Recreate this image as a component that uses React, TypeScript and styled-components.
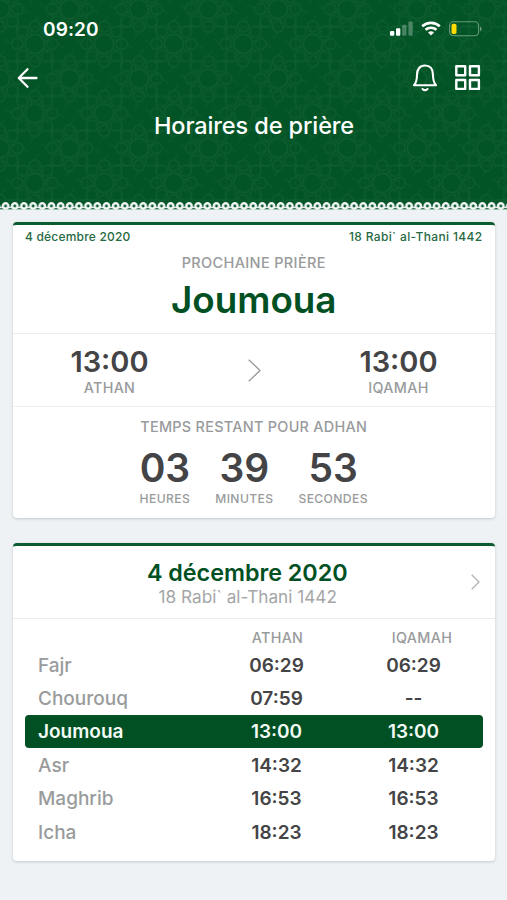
import React from "react";
import styled, { createGlobalStyle } from "styled-components";

const GREEN = "#005023";
const GREY = "#999b9c";
const DARK = "#444446";

const GlobalStyle = createGlobalStyle`
  * { box-sizing: border-box; }
  body { margin: 0; background: #eef2f5; font-family: Inter, "Liberation Sans", sans-serif; }
`;

const Screen = styled.div`
  width: 507px;
  height: 900px;
  overflow: hidden;
  background: #eef2f5;
`;

const Header = styled.header`
  position: relative;
  height: 210px;
  color: #fff;
`;

const HeaderArt = styled.svg`
  position: absolute;
  inset: 0;
  display: block;
`;

const HeaderContent = styled.div`
  position: relative;
`;

const StatusBar = styled.div`
  display: flex;
  align-items: center;
  justify-content: space-between;
  height: 57px;
  padding: 0 25px 0 43px;
`;

const Clock = styled.span`
  padding-top: 1px;
  font-size: 19px;
  font-weight: 600;
  letter-spacing: 0.1px;
`;

const StatusIcons = styled.div`
  display: flex;
  align-items: center;
  gap: 8px;
`;

const NavBar = styled.nav`
  display: flex;
  align-items: center;
  justify-content: space-between;
  height: 40px;
  padding: 1px 26px 0 17px;
`;

const NavActions = styled.div`
  display: flex;
  align-items: center;
  gap: 17px;
`;

const IconButton = styled.button`
  display: block;
  padding: 0;
  border: 0;
  background: none;
  color: inherit;
  svg { display: block; }
`;

const PageTitle = styled.h1`
  margin: 13px 0 0;
  padding-left: 1px;
  font-size: 23.5px;
  font-weight: 500;
  line-height: 32px;
  letter-spacing: -0.1px;
  text-align: center;
`;

const Cards = styled.main`
  display: flex;
  flex-direction: column;
  gap: 25px;
  padding: 12px 12.5px 0 13px;
`;

const Card = styled.section<{ $height: number }>`
  height: ${(p) => p.$height}px;
  border-top: 3px solid #0b5c30;
  border-radius: 4px;
  background: #fff;
  box-shadow: 0 1px 3px rgba(40, 55, 65, 0.22);
`;

const NextPrayer = styled.div`
  height: 109px;
  text-align: center;
  border-bottom: 1px solid #e9ebed;
`;

const DateRow = styled.div`
  display: flex;
  justify-content: space-between;
  padding: 3px 12px 0;
  color: #256a43;
  font-size: 12px;
  font-weight: 500;
  line-height: 18px;
  letter-spacing: 0.2px;
  > :last-child { letter-spacing: 0.35px; }
`;

const Caption = styled.div<{ $size?: number; $line?: number; $spacing?: number }>`
  color: ${GREY};
  font-size: ${(p) => p.$size ?? 14.3}px;
  font-weight: 500;
  line-height: ${(p) => p.$line ?? 20}px;
  letter-spacing: ${(p) => p.$spacing ?? 0.35}px;
`;

const PrayerName = styled.h2`
  margin: 1px 0 0;
  color: ${GREEN};
  font-size: 36.8px;
  font-weight: 600;
  line-height: 38px;
`;

const Times = styled.div`
  display: grid;
  grid-template-columns: 193px 1fr 192px;
  align-items: center;
  height: 73px;
  text-align: center;
  border-bottom: 1px solid #eff0f1;
  svg { display: block; margin: auto; }
`;

const BigTime = styled.div`
  padding-top: 3px;
  color: ${DARK};
  font-size: 29px;
  font-weight: 600;
  line-height: 31px;
`;

const Countdown = styled.div`
  padding-top: 10px;
  text-align: center;
`;

const Units = styled.div`
  display: flex;
  justify-content: center;
  gap: 25px;
  margin-top: 9px;
`;

const UnitValue = styled.div`
  color: ${DARK};
  font-size: 39px;
  font-weight: 600;
  line-height: 44px;
`;

const DayHeader = styled.div`
  display: grid;
  grid-template-columns: 27px 1fr 40px;
  align-items: center;
  height: 72.5px;
  border-bottom: 1px solid #e9ebed;
  text-align: center;
  svg { display: block; margin-left: 16px; margin-top: 1px; }
`;

const DayTitle = styled.h3`
  margin: 6px 0 0;
  color: ${GREEN};
  font-size: 23.3px;
  font-weight: 600;
  line-height: 25px;
`;

const HijriDate = styled.div`
  padding-left: 1px;
  color: #a4a6a7;
  font-size: 17.2px;
  font-weight: 400;
  line-height: 24px;
`;

const Table = styled.div`
  padding: 8.5px 12px 0;
`;

const Row = styled.div<{ $active?: boolean }>`
  display: grid;
  grid-template-columns: 183px 137px 137px;
  align-items: center;
  height: 33.4px;
  padding-top: 1px;
  border-radius: 4px;
  background: ${(p) => (p.$active ? GREEN : "transparent")};
  color: ${(p) => (p.$active ? "#f4faf6" : DARK)};
  font-size: 19px;
  font-weight: 600;
  text-align: center;
`;

const HeadRow = styled(Row)`
  height: 21px;
  padding: 0 0 0 1px;
  > :last-child { padding-left: 15px; }
`;

const RowName = styled.span<{ $active?: boolean }>`
  padding-left: 13px;
  color: ${(p) => (p.$active ? "#f4faf6" : GREY)};
  font-weight: ${(p) => (p.$active ? 600 : 500)};
  text-align: left;
`;

const P = 69.5;
const RING = [0, 45, 90, 135, 180, 225, 270, 315];

function Rosette({ x, y }: { x: number; y: number }) {
  return (
    <g transform={`translate(${x} ${y})`}>
      <circle r="9.6" strokeWidth="1.4" />
      {RING.map((a) => (
        <g key={a} transform={`rotate(${a})`}>
          <circle cx="17.4" r="5.6" />
          <path d="M9.2 3.8 L13 9.4 M23 0 L29 4.5" opacity="0.7" />
        </g>
      ))}
    </g>
  );
}

function HeaderBackground() {
  const spots = [[0, 0], [P, 0], [0, P], [P, P], [P / 2, P / 2]];
  return (
    <HeaderArt width="507" height="210" viewBox="0 0 507 210">
      <defs>
        <pattern id="rosettes" x="0" y="9.2" width={P} height={P} patternUnits="userSpaceOnUse">
          <g fill="none" stroke="#1f6c3d" strokeWidth="1.1" opacity="0.42">
            {spots.map(([x, y]) => <Rosette key={`${x}-${y}`} x={x} y={y} />)}
            <path d={`M0 ${P / 2 - 17} H${P} M0 ${P / 2 + 17} H${P} M${P / 2 + 17} 0 V${P} M${P / 2 - 17} 0 V${P}`} opacity="0.5" />
          </g>
        </pattern>
        <pattern id="lace" x="1" y="201" width="9.17" height="9" patternUnits="userSpaceOnUse">
          <rect y="5.6" width="9.17" height="1.6" fill="#dfeae5" />
          <rect y="8.6" width="9.17" height="0.4" fill="#eef2f5" />
          <circle cx="4.6" cy="5" r="2.7" fill="#0b5a2e" stroke="#f1f6f4" strokeWidth="2.5" />
        </pattern>
      </defs>
      <rect width="507" height="209.5" fill="#025326" />
      <rect width="507" height="209.5" fill="url(#rosettes)" />
      <rect y="201" width="507" height="9" fill="url(#lace)" />
    </HeaderArt>
  );
}

const Signal = () => (
  <svg width="23" height="15" viewBox="0 0 23 15" fill="#fff">
    <rect x="0" y="10" width="4.3" height="4.7" rx="1" />
    <rect x="6" y="7.3" width="4.3" height="7.4" rx="1" />
    <rect x="12.2" y="3.8" width="4.3" height="10.9" rx="1" opacity=".28" />
    <rect x="18.4" y="0.5" width="4.3" height="14.2" rx="1" opacity=".28" />
  </svg>
);

const Wifi = () => (
  <svg width="20" height="15" viewBox="0 0 20 15" fill="none" stroke="#fff" strokeWidth="2.6">
    <path d="M1.2 5.3 C6.2 .7 13.8 .7 18.8 5.3" />
    <path d="M4.5 8.8 C7.7 6 12.3 6 15.5 8.8" />
    <path d="M7 11.5 Q10 9.2 13 11.5 L10 14.5 Z" fill="#fff" stroke="none" />
  </svg>
);

const Battery = () => (
  <svg width="33" height="16" viewBox="0 0 33 16">
    <rect x=".6" y=".8" width="29" height="14" rx="4" fill="none" stroke="#fff" strokeOpacity=".4" strokeWidth="1.1" />
    <path d="M31 5.5 Q34 8 31 10.5Z" fill="#fff" opacity=".45" />
    <rect x="2.5" y="2.7" width="5" height="10.3" rx="1.8" fill="#ffdc00" />
  </svg>
);

const BackArrow = () => (
  <svg width="22" height="22" viewBox="0 0 22 22" fill="none" stroke="currentColor" strokeWidth="2.3" strokeLinecap="round" strokeLinejoin="round">
    <path d="M19.5 11 H2 M10.5 2.2 L1.8 11 L10.5 19.8" />
  </svg>
);

const Bell = () => (
  <svg width="26" height="28" viewBox="0 0 26 28" fill="none" stroke="currentColor" strokeWidth="2.1" strokeLinejoin="round" strokeLinecap="round">
    <path d="M2 21.2 C4.5 18.5 5 16.5 5 11 C5 5 8 1.5 13 1.5 C18 1.5 21 5 21 11 C21 16.5 21.5 18.5 24 21.2 Z" />
    <path d="M10.5 25 Q13 27.6 15.5 25" fill="currentColor" />
  </svg>
);

const GridIcon = () => (
  <svg width="26" height="26" viewBox="0 0 26 26" fill="none" stroke="currentColor" strokeWidth="2.4" strokeLinejoin="round">
    <rect x="1.3" y="1.3" width="8.9" height="8.9" />
    <rect x="15" y="1.3" width="8.9" height="8.9" />
    <rect x="1.3" y="15" width="8.9" height="8.9" />
    <rect x="15" y="15" width="8.9" height="8.9" />
  </svg>
);

const Chevron = ({ w, h, color }: { w: number; h: number; color: string }) => (
  <svg width={w} height={h} viewBox={`0 0 ${w} ${h}`} fill="none" stroke={color} strokeWidth="1.3" strokeLinejoin="round">
    <path d={`M.7 .7 L${w - 1} ${h / 2} L.7 ${h - 0.7}`} />
  </svg>
);

const units = [
  ["03", "HEURES"],
  ["39", "MINUTES"],
  ["53", "SECONDES"],
];

const prayers = [
  { name: "Fajr", athan: "06:29", iqamah: "06:29" },
  { name: "Chourouq", athan: "07:59", iqamah: "--" },
  { name: "Joumoua", athan: "13:00", iqamah: "13:00", active: true },
  { name: "Asr", athan: "14:32", iqamah: "14:32" },
  { name: "Maghrib", athan: "16:53", iqamah: "16:53" },
  { name: "Icha", athan: "18:23", iqamah: "18:23" },
];

export default function App() {
  return (
    <Screen>
      <GlobalStyle />
      <Header>
        <HeaderBackground />
        <HeaderContent>
          <StatusBar>
            <Clock>09:20</Clock>
            <StatusIcons><Signal /><Wifi /><Battery /></StatusIcons>
          </StatusBar>
          <NavBar>
            <IconButton aria-label="Retour"><BackArrow /></IconButton>
            <NavActions>
              <IconButton aria-label="Notifications"><Bell /></IconButton>
              <IconButton aria-label="Menu"><GridIcon /></IconButton>
            </NavActions>
          </NavBar>
          <PageTitle>Horaires de prière</PageTitle>
        </HeaderContent>
      </Header>
      <Cards>
        <Card $height={296}>
          <NextPrayer>
            <DateRow><span>4 décembre 2020</span><span>18 Rabi` al-Thani 1442</span></DateRow>
            <Caption $line={34} $size={14.5}>PROCHAINE PRIÈRE</Caption>
            <PrayerName>Joumoua</PrayerName>
          </NextPrayer>
          <Times>
            <div><BigTime>13:00</BigTime><Caption $line={21}>ATHAN</Caption></div>
            <Chevron w={13} h={23} color="#9a9a9a" />
            <div><BigTime>13:00</BigTime><Caption $line={21}>IQAMAH</Caption></div>
          </Times>
          <Countdown>
            <Caption $size={14.4} $spacing={0.3}>TEMPS RESTANT POUR ADHAN</Caption>
            <Units>
              {units.map(([value, label]) => (
                <div key={label}>
                  <UnitValue>{value}</UnitValue>
                  <Caption $size={12.1} $line={17} $spacing={0.4}>{label}</Caption>
                </div>
              ))}
            </Units>
          </Countdown>
        </Card>
        <Card $height={318}>
          <DayHeader>
            <span />
            <div>
              <DayTitle>4 décembre 2020</DayTitle>
              <HijriDate>18 Rabi` al-Thani 1442</HijriDate>
            </div>
            <Chevron w={9} h={16} color="#b4b4b4" />
          </DayHeader>
          <Table>
            <HeadRow><span /><Caption>ATHAN</Caption><Caption>IQAMAH</Caption></HeadRow>
            {prayers.map((p) => (
              <Row key={p.name} $active={p.active}>
                <RowName $active={p.active}>{p.name}</RowName>
                <span>{p.athan}</span>
                <span>{p.iqamah}</span>
              </Row>
            ))}
          </Table>
        </Card>
      </Cards>
    </Screen>
  );
}
